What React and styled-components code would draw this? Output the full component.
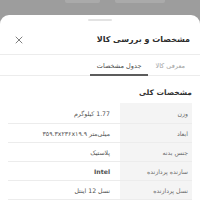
import React from "react";
import styled, { createGlobalStyle } from "styled-components";

const GlobalStyle = createGlobalStyle`
  html, body { margin: 0; padding: 0; width: 200px; height: 200px; overflow: hidden; }
  body { background: #9d9d9d; font-family: "DejaVu Sans", "Noto Sans", sans-serif; }
`;

const Page = styled.div`
  width: 200px;
  height: 200px;
  display: flex;
  flex-direction: column;
  background: #9d9d9d;
  overflow: hidden;
`;

const Behind = styled.div`
  height: 15px;
  flex: none;
  display: flex;
  align-items: flex-start;
  gap: 15px;
  padding-left: 65px;
`;

const GhostBar = styled.div`
  width: ${(p) => p.$w}px;
  height: 3px;
  background: #aaaaaa;
  border-radius: 0 0 2px 2px;
`;

const Sheet = styled.div`
  flex: 1;
  background: #fff;
  border-radius: 9px 9px 0 0;
  direction: rtl;
  display: flex;
  flex-direction: column;
`;

const Handle = styled.div`
  width: 24px;
  height: 2px;
  border-radius: 1px;
  background: #e3e3e3;
  margin: 4px auto 0;
  flex: none;
`;

const Header = styled.div`
  height: 34px;
  box-sizing: border-box;
  padding: 4px 10px 0 14px;
  display: flex;
  align-items: center;
  justify-content: space-between;
  border-bottom: 1px solid #ececec;
  flex: none;
`;

const Title = styled.div`
  font-size: 8px;
  font-weight: 700;
  color: #2c2c2c;
`;

const CloseBtn = styled.button`
  border: 0;
  background: none;
  padding: 0;
  width: 10px;
  height: 10px;
  display: flex;
  align-items: center;
  justify-content: center;
  color: #707070;
`;

const Tabs = styled.div`
  display: flex;
  padding: 0 8px;
  border-bottom: 1px solid #ececec;
  flex: none;
`;

const Tab = styled.div`
  padding: 3px 7px 0;
  height: 21px;
  box-sizing: border-box;
  display: flex;
  align-items: center;
  font-size: 6.5px;
  color: ${(p) => (p.$active ? "#4a4a4a" : "#a3a3a3")};
  border-bottom: 2px solid ${(p) => (p.$active ? "#5c5c5c" : "transparent")};
  margin-bottom: -1px;
`;

const SectionTitle = styled.div`
  font-size: 7.5px;
  font-weight: 700;
  color: #333;
  padding: 12px 8px 0;
  line-height: 10px;
  height: 27px;
  box-sizing: border-box;
  flex: none;
`;

const Table = styled.div`
  margin: 0 8px;
`;

const Row = styled.div`
  display: grid;
  grid-template-columns: 72px 1fr;
  height: 19px;
  border-bottom: 1px solid #ececec;
  box-sizing: border-box;
  &:first-child { height: 21px; }
`;

const Label = styled.div`
  background: #f4f4f4;
  display: flex;
  align-items: center;
  padding: 0 4px;
  font-size: 6.2px;
  color: #6a6a6a;
`;

const Value = styled.div`
  display: flex;
  align-items: center;
  padding: 0 10px;
  font-size: 6.2px;
  color: #505050;
  font-weight: ${(p) => (p.$bold ? 700 : 400)};
`;

const rows = [
  ["وزن", "1.77 کیلوگرم"],
  ["ابعاد", "میلی‌متر ۳۵۹.۳x۲۳۶x۱۹.۹"],
  ["جنس بدنه", "پلاستیک"],
  ["سازنده پردازنده", "Intel", true],
  ["نسل پردازنده", "نسل 12 اینتل"],
];

export default function App() {
  return (
    <Page>
      <GlobalStyle />
      <Behind>
        <GhostBar $w={35} />
        <GhostBar $w={50} />
      </Behind>
      <Sheet>
        <Handle />
        <Header>
          <Title>مشخصات و بررسی کالا</Title>
          <CloseBtn aria-label="close">
            <svg width="8" height="8" viewBox="0 0 8 8">
              <path d="M1 1L7 7M7 1L1 7" stroke="currentColor" strokeWidth="0.9" strokeLinecap="round" />
            </svg>
          </CloseBtn>
        </Header>
        <Tabs>
          <Tab>معرفی کالا</Tab>
          <Tab $active>جدول مشخصات</Tab>
        </Tabs>
        <SectionTitle>مشخصات کلی</SectionTitle>
        <Table>
          {rows.map(([l, v, b]) => (
            <Row key={l}>
              <Label>{l}</Label>
              <Value $bold={b}>{v}</Value>
            </Row>
          ))}
        </Table>
      </Sheet>
    </Page>
  );
}
